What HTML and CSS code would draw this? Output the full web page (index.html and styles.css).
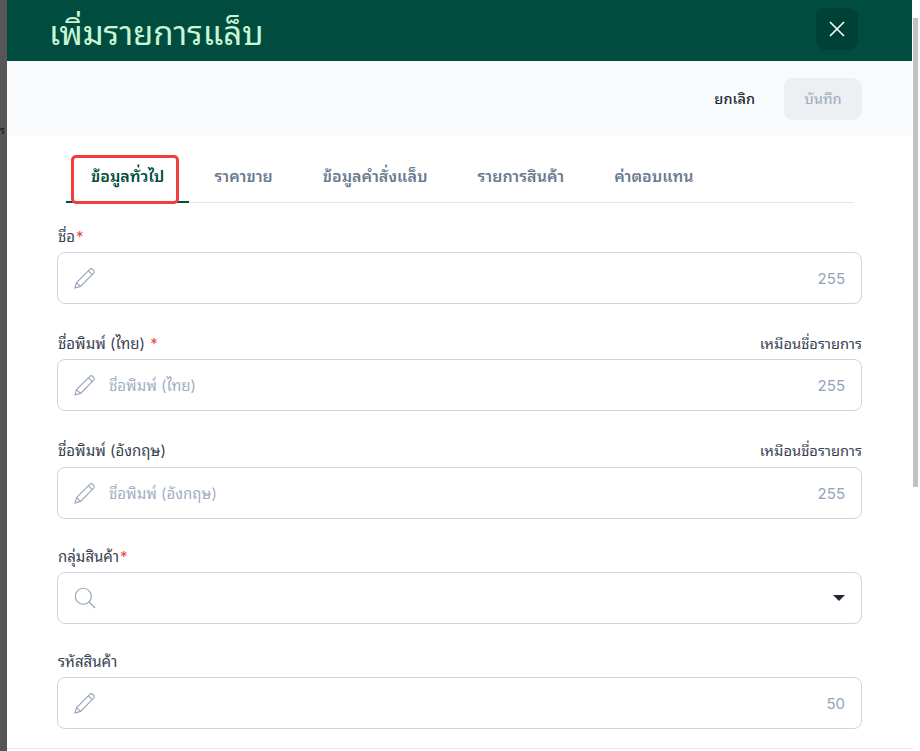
FILE: index.html
```html
<!DOCTYPE html>
<html lang="th">
<head>
  <meta charset="UTF-8" />
  <meta name="viewport" content="width=device-width, initial-scale=1.0"/>
  <title>เพิ่มรายการแล็บ</title>
  <link rel="stylesheet" href="styles.css">
</head>
<body>

  <svg class="icon-defs" width="0" height="0">
    <symbol id="pencil" viewBox="0 0 22 22">
      <path d="M1 21 L2.6 15.6 L15.8 2.4 Q17 1.2 18.2 2 L19.9 3.7 Q20.9 5 19.7 6.2 L6.5 19.4 Z M2.6 15.6 L6.5 19.4 M14.4 3.8 L18.3 7.6" />
    </symbol>
    <symbol id="search" viewBox="0 0 22 22">
      <circle cx="9.3" cy="9.3" r="8" />
      <path d="M15 15 L21 21" />
    </symbol>
  </svg>

  <div class="backdrop"><span class="backdrop-text">ร</span></div>

  <div class="modal">
    <header class="modal-header">
      <h1>เพิ่มรายการแล็บ</h1>
      <button class="close-btn" aria-label="close">
        <svg width="16" height="16" viewBox="0 0 16 16"><path d="M1 1 L15 15 M15 1 L1 15" /></svg>
      </button>
    </header>

    <div class="action-bar">
      <button class="btn-cancel">ยกเลิก</button>
      <button class="btn-save" disabled>บันทึก</button>
    </div>

    <nav class="tabs">
      <a class="tab active">ข้อมูลทั่วไป</a>
      <a class="tab">ราคาขาย</a>
      <a class="tab">ข้อมูลคำสั่งแล็บ</a>
      <a class="tab">รายการสินค้า</a>
      <a class="tab">ค่าตอบแทน</a>
      <div class="tab-highlight"></div>
    </nav>

    <form class="form">
      <div class="field">
        <div class="field-label"><label>ชื่อ<span class="req">*</span></label></div>
        <div class="input-box">
          <svg class="input-icon"><use href="#pencil"/></svg>
          <input type="text">
          <span class="counter">255</span>
        </div>
      </div>

      <div class="field tall">
        <div class="field-label"><label>ชื่อพิมพ์ (ไทย) <span class="req">*</span></label><a class="same-link">เหมือนชื่อรายการ</a></div>
        <div class="input-box">
          <svg class="input-icon"><use href="#pencil"/></svg>
          <input type="text" placeholder="ชื่อพิมพ์ (ไทย)">
          <span class="counter">255</span>
        </div>
      </div>

      <div class="field tall">
        <div class="field-label"><label>ชื่อพิมพ์ (อังกฤษ)</label><a class="same-link">เหมือนชื่อรายการ</a></div>
        <div class="input-box">
          <svg class="input-icon"><use href="#pencil"/></svg>
          <input type="text" placeholder="ชื่อพิมพ์ (อังกฤษ)">
          <span class="counter">255</span>
        </div>
      </div>

      <div class="field">
        <div class="field-label"><label>กลุ่มสินค้า<span class="req">*</span></label></div>
        <div class="input-box">
          <svg class="input-icon"><use href="#search"/></svg>
          <input type="text">
          <span class="caret"></span>
        </div>
      </div>

      <div class="field last">
        <div class="field-label"><label>รหัสสินค้า</label></div>
        <div class="input-box">
          <svg class="input-icon"><use href="#pencil"/></svg>
          <input type="text">
          <span class="counter">50</span>
        </div>
      </div>
    </form>
    <div class="form-end"></div>
  </div>

  <div class="scroll-rail"><div class="scroll-thumb"></div></div>

</body>
</html>
```

FILE: styles.css
```css
* {
  box-sizing: border-box;
}

body {
  margin: 0;
  height: 751px;
  overflow: hidden;
  display: flex;
  background: #fff;
  font-family: Inter, "Noto Sans Thai Looped", Tahoma, Loma, "Noto Sans Thai", "Noto Sans", sans-serif;
  font-size: 15px;
  color: #1f2937;
}

.icon-defs {
  position: absolute;
}

.backdrop {
  width: 7px;
  flex-shrink: 0;
  background: #565656;
  overflow: hidden;
  position: relative;
}

.backdrop-text {
  position: absolute;
  top: 121px;
  left: 0;
  font-size: 10px;
  color: #111;
}

.modal {
  flex: 1;
  min-width: 0;
  background: #fff;
}

.modal-header {
  height: 61px;
  background: #004d40;
  display: flex;
  align-items: center;
  justify-content: space-between;
  padding: 0 54px 0 42px;
}

.modal-header h1 {
  margin: 0;
  font-size: 33px;
  font-weight: 400;
  color: #c9f5d5;
}

.close-btn {
  width: 42px;
  height: 42px;
  margin-top: -3px;
  border: none;
  border-radius: 9px;
  background: #004136;
  display: flex;
  align-items: center;
  justify-content: center;
}

.close-btn path {
  stroke: #fff;
  stroke-width: 1.6;
  fill: none;
}

.action-bar {
  height: 75px;
  background: #f9fafb;
  display: flex;
  align-items: center;
  justify-content: flex-end;
  gap: 29px;
  padding-right: 50px;
}

.btn-cancel,
.btn-save {
  font: inherit;
  font-size: 14.5px;
  font-weight: 500;
  border: none;
  background: none;
}

.btn-cancel {
  padding: 0 0 2px;
  color: #1f2937;
}

.btn-save {
  width: 78px;
  height: 42px;
  padding: 0 0 2px;
  border-radius: 9px;
  background: #edf0f3;
  color: #a6b1c4;
}

.tabs {
  display: flex;
  position: relative;
  height: 67px;
  margin: 0 58px 0 59px;
  border-bottom: 1px solid #e5e7eb;
}

.tab {
  padding: 0 25px;
  line-height: 80px;
  height: 67px;
  font-size: 16px;
  font-weight: 600;
  color: #6b7a90;
  white-space: nowrap;
}

.tab.active {
  color: #004d40;
  border-bottom: 2px solid #004d40;
}

/* red marker drawn over the first tab */
.tab-highlight {
  position: absolute;
  left: 5px;
  top: 19px;
  width: 108px;
  height: 49px;
  border: 3px solid #f03e3e;
  border-radius: 5px;
}

.form {
  padding: 21px 50px 0;
}

.field {
  margin-bottom: 25px;
}

.field.last {
  margin-bottom: 19px;
}

.field-label {
  height: 28px;
  padding: 1px 0 0 1px;
  display: flex;
  justify-content: space-between;
  align-items: flex-start;
  line-height: 24px;
  color: #374151;
}

.field.tall .field-label {
  height: 30px;
  padding-top: 2.5px;
}

.field.tall + .field.tall .field-label {
  height: 31px;
}

.req {
  margin-left: 1px;
  color: #ef4444;
}

.same-link {
  font-size: 14.7px;
}

.input-box {
  height: 52px;
  display: flex;
  align-items: center;
  border: 1px solid #cbd5e1;
  border-radius: 8px;
  padding: 0 16px;
  background: #fff;
}

.input-icon {
  width: 22px;
  height: 22px;
  flex-shrink: 0;
  fill: none;
  stroke: #94a3b8;
  stroke-width: 1.1;
}

.input-box input {
  flex: 1;
  min-width: 0;
  margin-left: 13px;
  border: none;
  outline: none;
  background: none;
  padding: 0;
  font: inherit;
  color: #1f2937;
}

.input-box input::placeholder {
  color: #a0aec0;
}

.counter {
  color: #94a3b8;
}

.caret {
  width: 0;
  height: 0;
  border-left: 6px solid transparent;
  border-right: 6px solid transparent;
  border-top: 6px solid #1f2937;
}

.form-end {
  border-top: 1px solid #e5e7eb;
}

.scroll-rail {
  width: 8px;
  flex-shrink: 0;
  background: #fff;
  padding-top: 18px;
}

.scroll-thumb {
  width: 5px;
  margin-left: 1px;
  height: 469px;
  background: #c1c1c1;
}
```
